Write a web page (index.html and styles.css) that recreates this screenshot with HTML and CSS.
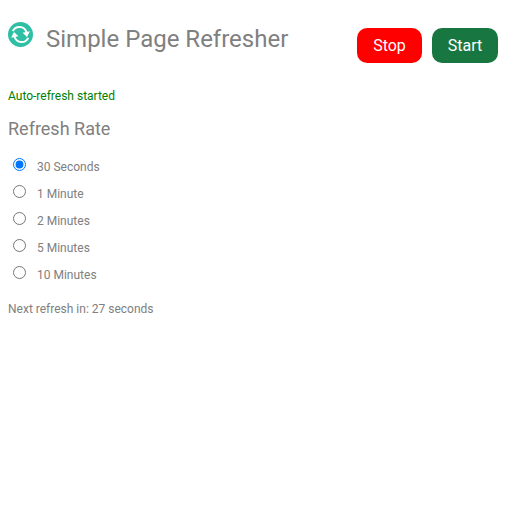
FILE: index.html
```html
<!DOCTYPE html>
<html lang="en">
<head>
<meta charset="utf-8">
<title>Simple Page Refresher</title>
<link rel="stylesheet" href="styles.css">
</head>
<body>
<header class="header">
  <svg class="logo" viewBox="0 0 25 25">
    <circle cx="12.500" cy="12.500" r="12.500" fill="#2fbfa5"/>
    <g fill="none" stroke="#fff" stroke-width="1.900">
      <path d="M4.800 9.200C7.200 3.600 16.400 3.200 18.600 10.500"/>
      <path d="M20.200 15.800C17.800 21.400 8.600 21.800 6.400 14.500"/>
    </g>
    <path d="M14.600 10.800L21.900 9.300L19 15.100ZM10.400 14.200L3.100 15.700L6 9.900Z" fill="#fff"/>
  </svg>
  <h1 class="title">Simple Page Refresher</h1>
  <div class="actions">
    <button class="button stop">Stop</button>
    <button class="button start">Start</button>
  </div>
</header>
<p class="status">Auto-refresh started</p>
<h2 class="subtitle">Refresh Rate</h2>
<form class="rates">
  <label class="rate"><input type="radio" name="rate" checked><span>30 Seconds</span></label>
  <label class="rate"><input type="radio" name="rate"><span>1 Minute</span></label>
  <label class="rate"><input type="radio" name="rate"><span>2 Minutes</span></label>
  <label class="rate"><input type="radio" name="rate"><span>5 Minutes</span></label>
  <label class="rate"><input type="radio" name="rate"><span>10 Minutes</span></label>
</form>
<p class="next">Next refresh in: 27 seconds</p>
</body>
</html>
```
FILE: styles.css
```css
body { margin: 0; padding: 21px 17px 0 8px; background: #fff; color: #808080; font: 12px/16px Roboto, sans-serif; }
.header { display: flex; align-items: flex-start; height: 67px; }
.logo { width: 25px; height: 25px; margin: 1px 13px 0 0; }
.title { margin: 2px 0 0; font-size: 24px; line-height: 32px; font-weight: 400; }
.actions { display: flex; gap: 10px; margin: 7px 0 0 auto; }
.button { height: 35px; padding: 0; border: 0; border-radius: 10px; color: #fff; font: 16px/35px Roboto, sans-serif; }
.stop { width: 65px; background: #f00; }
.start { width: 66px; background: #187741; }
.status { margin: 0; color: #008000; }
.subtitle { margin: 13px 0 15px; font-size: 18px; line-height: 24px; font-weight: 400; }
.rate { display: flex; height: 27px; align-items: flex-start; }
.rate input { width: 13px; height: 13px; margin: 2px 11px 0 5px; }
.rate span { padding-top: 3px; }
.next { margin: 10px 0 0; }
```
